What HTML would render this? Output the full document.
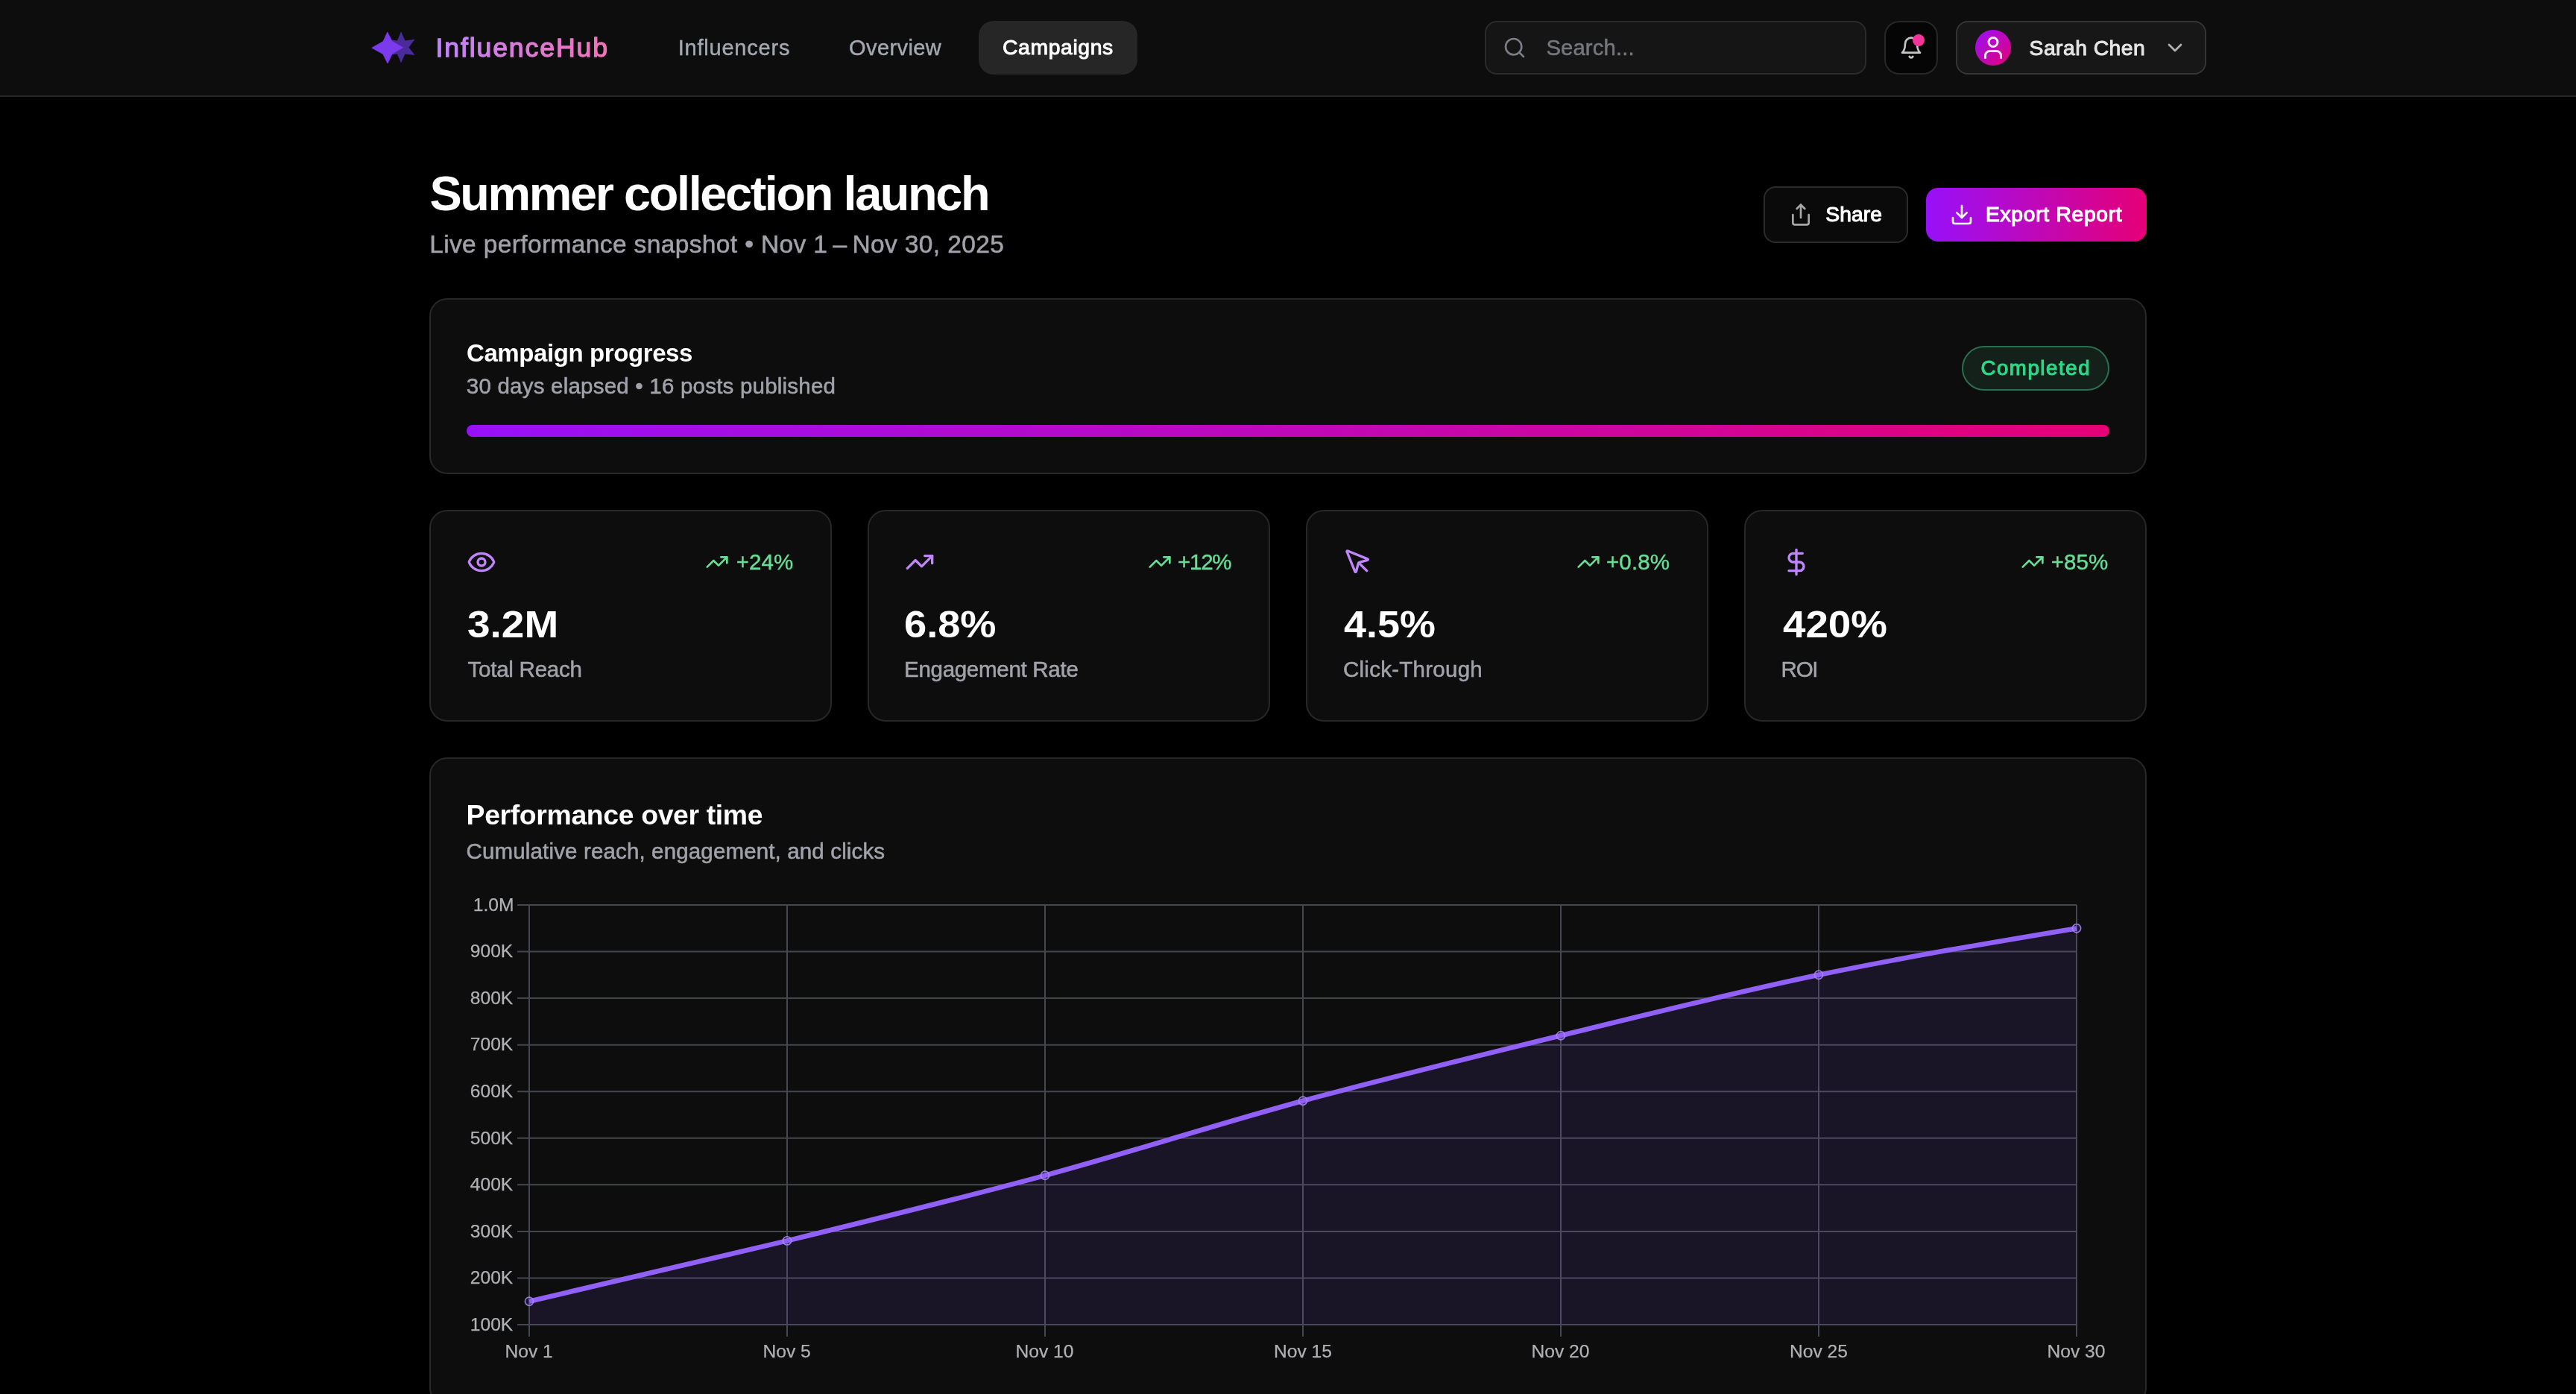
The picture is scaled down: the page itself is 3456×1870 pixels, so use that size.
<!DOCTYPE html>
<html lang="en">
<head>
<meta charset="utf-8">
<title>InfluenceHub - Summer collection launch</title>
<style>
html,body{margin:0;padding:0;background:#000;}
body{width:3456px;height:1870px;position:relative;overflow:hidden;font-family:"Liberation Sans",sans-serif;}
.abs{position:absolute;}
.t{position:absolute;white-space:pre;line-height:1;font-family:"Liberation Sans",sans-serif;}
.box{position:absolute;box-sizing:border-box;}
.card{position:absolute;box-sizing:border-box;background:#0d0d0d;border:2px solid #272727;border-radius:24px;}
svg.ic{position:absolute;fill:none;stroke-width:2;stroke-linecap:round;stroke-linejoin:round;}
</style>
</head>
<body>

<!-- ================= HEADER ================= -->
<div class="box" style="left:0;top:0;width:3456px;height:130px;background:#0d0d0d;border-bottom:2px solid #262626;"></div>

<!-- logo -->
<svg class="abs" style="left:480px;top:20px;will-change:transform" width="380" height="90" viewBox="480 20 380 90">
  <defs>
    <linearGradient id="lg" x1="585" y1="0" x2="814" y2="0" gradientUnits="userSpaceOnUse">
      <stop offset="0" stop-color="#c084fc"/><stop offset="1" stop-color="#f472b6"/>
    </linearGradient>
  </defs>
  <!-- six point star (behind) -->
  <path fill="#4b2a9a" d="M538.1,42.2 L543.3,54.4 L556.5,52.8 L548.5,63.4 L556.5,74.0 L543.3,72.4 L538.1,84.6 L532.9,72.4 L519.7,74.0 L527.7,63.4 L519.7,52.8 L532.9,54.4 Z"/>
  <!-- four point star (front) -->
  <path fill="#7c3aed" stroke="#7c3aed" stroke-width="0.8" stroke-linejoin="round" d="M519.8,43.0 L526.0,55.4 L540.6,63.8 L526.3,72.0 L520.0,85.0 L513.7,72.4 L498.8,64.2 L514.0,55.6 Z"/>
  <text id="logotext" x="584.4" y="76.1" font-family="Liberation Sans, sans-serif" font-size="35.6" fill="url(#lg)" stroke="url(#lg)" stroke-width="1.3" textLength="230.6" lengthAdjust="spacing">InfluenceHub</text>
</svg>

<!-- nav active pill -->
<div class="box" style="left:1313px;top:28px;width:213px;height:72px;background:#262626;border-radius:20px;"></div>

<!-- search -->
<div class="box" style="left:1992px;top:28px;width:512px;height:72px;background:#151515;border:2px solid #2b2b2b;border-radius:16px;"></div>
<svg class="ic" style="left:2016px;top:48px" width="32" height="32" viewBox="0 0 24 24" stroke="#7b7d84"><circle cx="11" cy="11" r="8"/><path d="m21 21-4.3-4.3"/></svg>

<!-- bell -->
<div class="box" style="left:2528px;top:28px;width:72px;height:72px;background:#050505;border:2px solid #272727;border-radius:20px;"></div>
<svg class="ic" style="left:2548px;top:48px" width="32" height="32" viewBox="0 0 24 24" stroke="#c4c4c8"><path d="M6 8a6 6 0 0 1 12 0c0 7 3 9 3 9H3s3-2 3-9"/><path d="M10.3 21a1.94 1.94 0 0 0 3.4 0"/></svg>
<div class="box" style="left:2566px;top:46px;width:16px;height:16px;border-radius:50%;background:#f6339a;"></div>

<!-- user -->
<div class="box" style="left:2624px;top:28px;width:336px;height:72px;background:#171717;border:2px solid #343434;border-radius:16px;"></div>
<div class="box" style="left:2650px;top:40px;width:48px;height:48px;border-radius:50%;background:linear-gradient(135deg,#9810fa 0%,#e60076 100%);"></div>
<svg class="ic" style="left:2656px;top:46px" width="36" height="36" viewBox="0 0 24 24" stroke="#ffe9ff"><path d="M19 21v-2a4 4 0 0 0-4-4H9a4 4 0 0 0-4 4v2"/><circle cx="12" cy="7" r="4"/></svg>
<svg class="ic" style="left:2902px;top:48px" width="32" height="32" viewBox="0 0 24 24" stroke="#b0b1b2"><path d="m6 9 6 6 6-6"/></svg>

<!-- ================= TITLE ROW ================= -->
<div class="box" style="left:2366px;top:250px;width:194px;height:76px;background:#0a0a0a;border:2px solid #2b2b2b;border-radius:16px;"></div>
<svg class="ic" style="left:2400px;top:271.5px" width="32" height="32" viewBox="0 0 24 24" stroke="#a8a8a8"><path d="M4 12v8a2 2 0 0 0 2 2h12a2 2 0 0 0 2-2v-8"/><polyline points="16 6 12 2 8 6"/><line x1="12" y1="2" x2="12" y2="15"/></svg>

<div class="box" style="left:2584px;top:252px;width:296px;height:72px;border-radius:16px;background:linear-gradient(90deg,#9810fa 0%,#e60076 100%);"></div>
<svg class="ic" style="left:2616px;top:271.5px" width="32" height="32" viewBox="0 0 24 24" stroke="#ffffff"><path d="M21 15v4a2 2 0 0 1-2 2H5a2 2 0 0 1-2-2v-4"/><polyline points="7 10 12 15 17 10"/><line x1="12" y1="15" x2="12" y2="3"/></svg>

<!-- ================= PROGRESS CARD ================= -->
<div class="card" style="left:576px;top:400px;width:2304px;height:236px;"></div>
<div class="box" style="left:2632px;top:464px;width:198px;height:60px;border-radius:30px;background:#13211a;border:2px solid #2c6e52;"></div>
<div class="box" style="left:626px;top:570px;width:2204px;height:16px;border-radius:8px;background:linear-gradient(90deg,#9810fa 0%,#e60076 100%);"></div>

<!-- ================= STAT CARDS ================= -->
<div class="card" style="left:576px;top:684px;width:540px;height:284px;"></div>
<div class="card" style="left:1164px;top:684px;width:540px;height:284px;"></div>
<div class="card" style="left:1752px;top:684px;width:540px;height:284px;"></div>
<div class="card" style="left:2340px;top:684px;width:540px;height:284px;"></div>

<!-- main icons (40px, purple) -->
<svg class="ic" style="left:626px;top:734px" width="40" height="40" viewBox="0 0 24 24" stroke="#c084fc"><path d="M2.062 12.348a1 1 0 0 1 0-.696 10.75 10.75 0 0 1 19.876 0 1 1 0 0 1 0 .696 10.75 10.75 0 0 1-19.876 0"/><circle cx="12" cy="12" r="3"/></svg>
<svg class="ic" style="left:1214px;top:734px" width="40" height="40" viewBox="0 0 24 24" stroke="#c084fc"><polyline points="22 7 13.5 15.5 8.5 10.5 2 17"/><polyline points="16 7 22 7 22 13"/></svg>
<svg class="ic" style="left:1802px;top:734px" width="40" height="40" viewBox="0 0 24 24" stroke="#c084fc"><path d="M12.586 12.586 19 19"/><path d="M3.688 3.037a.497.497 0 0 0-.651.651l6.5 15.999a.501.501 0 0 0 .947-.062l1.569-6.083a2 2 0 0 1 1.448-1.479l6.124-1.579a.5.5 0 0 0 .063-.947z"/></svg>
<svg class="ic" style="left:2390px;top:734px" width="40" height="40" viewBox="0 0 24 24" stroke="#c084fc"><line x1="12" y1="2" x2="12" y2="22"/><path d="M17 5H9.5a3.5 3.5 0 0 0 0 7h5a3.5 3.5 0 0 1 0 7H6"/></svg>

<!-- trend icons (32px, green) -->
<svg class="ic" style="left:946px;top:738px" width="32" height="32" viewBox="0 0 24 24" stroke="#66de96"><polyline points="22 7 13.5 15.5 8.5 10.5 2 17"/><polyline points="16 7 22 7 22 13"/></svg>
<svg class="ic" style="left:1540.4px;top:738px" width="32" height="32" viewBox="0 0 24 24" stroke="#66de96"><polyline points="22 7 13.5 15.5 8.5 10.5 2 17"/><polyline points="16 7 22 7 22 13"/></svg>
<svg class="ic" style="left:2114.6px;top:738px" width="32" height="32" viewBox="0 0 24 24" stroke="#66de96"><polyline points="22 7 13.5 15.5 8.5 10.5 2 17"/><polyline points="16 7 22 7 22 13"/></svg>
<svg class="ic" style="left:2710.5px;top:738px" width="32" height="32" viewBox="0 0 24 24" stroke="#66de96"><polyline points="22 7 13.5 15.5 8.5 10.5 2 17"/><polyline points="16 7 22 7 22 13"/></svg>

<!-- ================= CHART CARD ================= -->
<div class="card" style="left:576px;top:1016px;width:2304px;height:870px;"></div>
<svg class="abs" style="left:0;top:0" width="3456" height="1870" viewBox="0 0 3456 1870">
<g stroke="#45474f" stroke-width="2" fill="none">
<path d="M694,1214.0H2786"/>
<path d="M694,1276.6H2786"/>
<path d="M694,1339.1H2786"/>
<path d="M694,1401.7H2786"/>
<path d="M694,1464.2H2786"/>
<path d="M694,1526.8H2786"/>
<path d="M694,1589.3H2786"/>
<path d="M694,1651.9H2786"/>
<path d="M694,1714.4H2786"/>
<path d="M694,1777.0H2786"/>
<path d="M710,1214.0V1793"/>
<path d="M1056,1214.0V1793"/>
<path d="M1402,1214.0V1793"/>
<path d="M1748,1214.0V1793"/>
<path d="M2094,1214.0V1793"/>
<path d="M2440,1214.0V1793"/>
<path d="M2786,1214.0V1793"/>
</g>
<path d="M710.00,1745.72C825.33,1719.14,940.67,1692.55,1056.00,1664.40C1171.33,1636.25,1286.67,1608.10,1402.00,1576.82C1517.33,1545.54,1632.67,1508.01,1748.00,1476.73C1863.33,1445.46,1978.67,1417.31,2094.00,1389.16C2209.33,1361.01,2324.67,1331.81,2440.00,1307.83C2555.33,1283.85,2670.67,1264.57,2786.00,1245.28L2786.00,1777.00L710.00,1777.00Z" fill="#8b5cf6" fill-opacity="0.11"/>
<path d="M710.00,1745.72C825.33,1719.14,940.67,1692.55,1056.00,1664.40C1171.33,1636.25,1286.67,1608.10,1402.00,1576.82C1517.33,1545.54,1632.67,1508.01,1748.00,1476.73C1863.33,1445.46,1978.67,1417.31,2094.00,1389.16C2209.33,1361.01,2324.67,1331.81,2440.00,1307.83C2555.33,1283.85,2670.67,1264.57,2786.00,1245.28" fill="none" stroke="#9060f7" stroke-width="6.6" stroke-linecap="butt" stroke-linejoin="round"/>
<circle cx="710.0" cy="1745.7" r="5.6" fill="#8b5cf6" fill-opacity="0.12" stroke="#a78bfa" stroke-opacity="0.85" stroke-width="1.7"/>
<circle cx="1056.0" cy="1664.4" r="5.6" fill="#8b5cf6" fill-opacity="0.12" stroke="#a78bfa" stroke-opacity="0.85" stroke-width="1.7"/>
<circle cx="1402.0" cy="1576.8" r="5.6" fill="#8b5cf6" fill-opacity="0.12" stroke="#a78bfa" stroke-opacity="0.85" stroke-width="1.7"/>
<circle cx="1748.0" cy="1476.7" r="5.6" fill="#8b5cf6" fill-opacity="0.12" stroke="#a78bfa" stroke-opacity="0.85" stroke-width="1.7"/>
<circle cx="2094.0" cy="1389.2" r="5.6" fill="#8b5cf6" fill-opacity="0.12" stroke="#a78bfa" stroke-opacity="0.85" stroke-width="1.7"/>
<circle cx="2440.0" cy="1307.8" r="5.6" fill="#8b5cf6" fill-opacity="0.12" stroke="#a78bfa" stroke-opacity="0.85" stroke-width="1.7"/>
<circle cx="2786.0" cy="1245.3" r="5.6" fill="#8b5cf6" fill-opacity="0.12" stroke="#a78bfa" stroke-opacity="0.85" stroke-width="1.7"/>
</svg>

<!-- ================= TEXT ================= -->
<div id="txt" style="position:absolute;left:0;top:0;width:3456px;height:1870px;will-change:transform;">
<div class="t" style="top:50px;font-size:29px;color:#a3a8b1;left:909.70px;letter-spacing:0.790px;-webkit-text-stroke:0.45px #a3a8b1;">Influencers</div>
<div class="t" style="top:50px;font-size:29px;color:#a3a8b1;left:1139.00px;letter-spacing:0.414px;-webkit-text-stroke:0.45px #a3a8b1;">Overview</div>
<div class="t" style="top:49px;font-size:28.3px;color:#ffffff;left:1345.00px;letter-spacing:0.638px;-webkit-text-stroke:1.0px #ffffff;">Campaigns</div>
<div class="t" style="top:49px;font-size:29.3px;color:#74767d;left:2074.40px;letter-spacing:0.112px;-webkit-text-stroke:0.55px #74767d;">Search...</div>
<div class="t" style="top:50px;font-size:28.3px;color:#e5e5e5;left:2722.60px;letter-spacing:0.456px;-webkit-text-stroke:1.0px #e5e5e5;">Sarah Chen</div>
<div class="t" style="top:228px;font-size:64.8px;color:#ffffff;left:576.40px;font-weight:700;letter-spacing:-2.365px;">Summer collection launch</div>
<div class="t" style="top:311px;font-size:33.5px;color:#a1a2aa;left:576.20px;letter-spacing:0.370px;-webkit-text-stroke:0.55px #a1a2aa;">Live performance snapshot • Nov 1 – Nov 30, 2025</div>
<div class="t" style="top:273px;font-size:28.2px;color:#ffffff;left:2449.30px;letter-spacing:0.125px;-webkit-text-stroke:1.1px #ffffff;">Share</div>
<div class="t" style="top:273px;font-size:28.2px;color:#ffffff;left:2664.00px;letter-spacing:0.733px;-webkit-text-stroke:1.1px #ffffff;">Export Report</div>
<div class="t" style="top:457px;font-size:33px;color:#ffffff;left:626.00px;font-weight:700;letter-spacing:-0.406px;">Campaign progress</div>
<div class="t" style="top:503px;font-size:29.5px;color:#a1a2aa;left:625.80px;letter-spacing:0.217px;-webkit-text-stroke:0.55px #a1a2aa;">30 days elapsed • 16 posts published</div>
<div class="t" style="top:480px;font-size:27.6px;color:#2fd887;left:2657.40px;letter-spacing:1.588px;-webkit-text-stroke:1.1px #2fd887;">Completed</div>
<div class="t" style="top:739px;font-size:29.5px;color:#66de96;left:987.70px;letter-spacing:0.100px;-webkit-text-stroke:0.4px #66de96;">+24%</div>
<div class="t" style="top:739px;font-size:29.5px;color:#66de96;left:1580.00px;letter-spacing:-1.239px;-webkit-text-stroke:0.4px #66de96;">+12%</div>
<div class="t" style="top:739px;font-size:29.5px;color:#66de96;left:2155.00px;letter-spacing:0.125px;-webkit-text-stroke:0.4px #66de96;">+0.8%</div>
<div class="t" style="top:739px;font-size:29.5px;color:#66de96;left:2751.70px;letter-spacing:0.067px;-webkit-text-stroke:0.4px #66de96;">+85%</div>
<div class="t" style="top:813px;font-size:50.5px;color:#ffffff;transform:scaleX(1.0880);transform-origin:0 0;left:626.61px;font-weight:700;">3.2M</div>
<div class="t" style="top:813px;font-size:50.5px;color:#ffffff;transform:scaleX(1.0732);transform-origin:0 0;left:1213.05px;font-weight:700;">6.8%</div>
<div class="t" style="top:813px;font-size:50.5px;color:#ffffff;transform:scaleX(1.0667);transform-origin:0 0;left:1803.00px;font-weight:700;">4.5%</div>
<div class="t" style="top:813px;font-size:50.5px;color:#ffffff;transform:scaleX(1.0836);transform-origin:0 0;left:2391.60px;font-weight:700;">420%</div>
<div class="t" style="top:883px;font-size:29.5px;color:#a1a2aa;left:627.50px;letter-spacing:-0.240px;-webkit-text-stroke:0.55px #a1a2aa;">Total Reach</div>
<div class="t" style="top:883px;font-size:29.5px;color:#a1a2aa;left:1213.00px;letter-spacing:-0.286px;-webkit-text-stroke:0.55px #a1a2aa;">Engagement Rate</div>
<div class="t" style="top:883px;font-size:29.5px;color:#a1a2aa;left:1802.00px;letter-spacing:0.258px;-webkit-text-stroke:0.55px #a1a2aa;">Click-Through</div>
<div class="t" style="top:883px;font-size:29.5px;color:#a1a2aa;left:2389.60px;letter-spacing:-1.239px;-webkit-text-stroke:0.55px #a1a2aa;">ROI</div>
<div class="t" style="top:1075px;font-size:37.4px;color:#ffffff;left:625.60px;font-weight:700;letter-spacing:-0.365px;">Performance over time</div>
<div class="t" style="top:1127px;font-size:29.5px;color:#a1a2aa;left:625.60px;letter-spacing:0.144px;-webkit-text-stroke:0.55px #a1a2aa;">Cumulative reach, engagement, and clicks</div>
<div class="t" style="top:1202px;font-size:24.6px;color:#b0b1b5;left:634.80px;-webkit-text-stroke:0.25px #b0b1b5;">1.0M</div>
<div class="t" style="top:1264px;font-size:24.6px;color:#b0b1b5;left:630.80px;-webkit-text-stroke:0.25px #b0b1b5;">900K</div>
<div class="t" style="top:1327px;font-size:24.6px;color:#b0b1b5;left:630.80px;-webkit-text-stroke:0.25px #b0b1b5;">800K</div>
<div class="t" style="top:1389px;font-size:24.6px;color:#b0b1b5;left:630.80px;-webkit-text-stroke:0.25px #b0b1b5;">700K</div>
<div class="t" style="top:1452px;font-size:24.6px;color:#b0b1b5;left:630.80px;-webkit-text-stroke:0.25px #b0b1b5;">600K</div>
<div class="t" style="top:1515px;font-size:24.6px;color:#b0b1b5;left:630.80px;-webkit-text-stroke:0.25px #b0b1b5;">500K</div>
<div class="t" style="top:1577px;font-size:24.6px;color:#b0b1b5;left:630.80px;-webkit-text-stroke:0.25px #b0b1b5;">400K</div>
<div class="t" style="top:1640px;font-size:24.6px;color:#b0b1b5;left:630.80px;-webkit-text-stroke:0.25px #b0b1b5;">300K</div>
<div class="t" style="top:1702px;font-size:24.6px;color:#b0b1b5;left:630.80px;-webkit-text-stroke:0.25px #b0b1b5;">200K</div>
<div class="t" style="top:1765px;font-size:24.6px;color:#b0b1b5;left:630.80px;-webkit-text-stroke:0.25px #b0b1b5;">100K</div>
<div class="t" style="top:1801px;font-size:24.6px;color:#b0b1b5;left:677.50px;-webkit-text-stroke:0.25px #b0b1b5;">Nov 1</div>
<div class="t" style="top:1801px;font-size:24.6px;color:#b0b1b5;left:1023.50px;-webkit-text-stroke:0.25px #b0b1b5;">Nov 5</div>
<div class="t" style="top:1801px;font-size:24.6px;color:#b0b1b5;left:1362.50px;-webkit-text-stroke:0.25px #b0b1b5;">Nov 10</div>
<div class="t" style="top:1801px;font-size:24.6px;color:#b0b1b5;left:1709.00px;-webkit-text-stroke:0.25px #b0b1b5;">Nov 15</div>
<div class="t" style="top:1801px;font-size:24.6px;color:#b0b1b5;left:2054.50px;-webkit-text-stroke:0.25px #b0b1b5;">Nov 20</div>
<div class="t" style="top:1801px;font-size:24.6px;color:#b0b1b5;left:2401.00px;-webkit-text-stroke:0.25px #b0b1b5;">Nov 25</div>
<div class="t" style="top:1801px;font-size:24.6px;color:#b0b1b5;left:2746.50px;-webkit-text-stroke:0.25px #b0b1b5;">Nov 30</div>
</div>

<script>
/* fitZoom: no-op at the native 3456px viewport; scales the fixed layout if the viewport width differs */
(function(){var w=window.innerWidth||3456;if(w&&Math.abs(w-3456)>1){document.body.style.zoom=(w/3456);}})();
</script>
</body>
</html>
